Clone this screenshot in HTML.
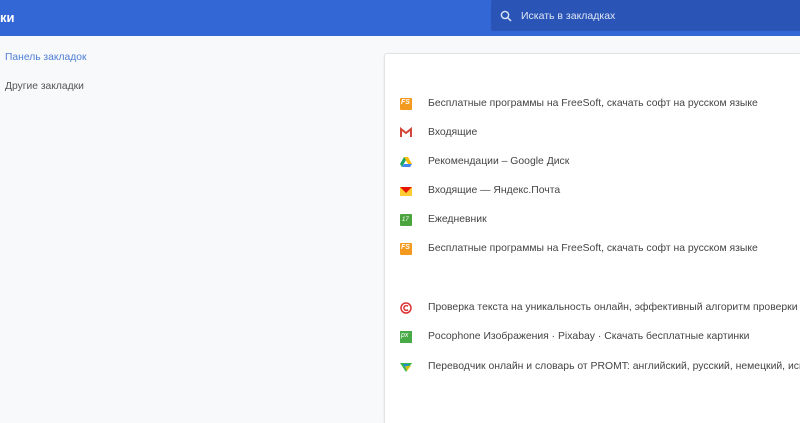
<!DOCTYPE html>
<html><head><meta charset="utf-8"><style>
*{margin:0;padding:0;box-sizing:border-box}
html,body{width:800px;height:423px;overflow:hidden}
body{background:#f8f9fa;font-family:"Liberation Sans",Arial,sans-serif;position:relative}
#wrap{position:absolute;left:0;top:0;width:800px;height:423px;overflow:hidden}
.hdr{position:absolute;left:0;top:0;width:800px;height:36px;background:#3367d6}
.title{position:absolute;left:0;top:10px;color:#fff;font-size:13px;font-weight:bold}
.search{position:absolute;left:491px;top:0;width:309px;height:31px;background:#2a55b7;border-radius:2px 0 0 2px}
.search span{position:absolute;left:30px;top:10px;color:#dfe6f5;font-size:10.5px}
.side{position:absolute;left:5px;font-size:10.3px}
.card{position:absolute;left:384px;top:53px;width:416px;height:370px;background:#fff;border:1px solid #e3e3e3;border-right:none;border-bottom:none;border-radius:3px 0 0 0;box-shadow:0 1px 2px rgba(0,0,0,.08)}
.row{position:absolute;left:400px;width:400px;overflow:hidden;height:16px;font-size:10.4px;color:#444}
.row i{position:absolute;left:0;top:2px;width:12px;height:12px}
.row span{position:absolute;left:28px;top:1px;white-space:nowrap;line-height:14px}
</style></head><body><div id="wrap">
<div class="hdr"><div class="title">ки</div>
<div class="search"><svg style="position:absolute;left:9px;top:10px" width="12" height="12" viewBox="0 0 12 12"><circle cx="5" cy="5" r="3.6" fill="none" stroke="#dfe6f5" stroke-width="1.4"/><path d="M7.6 7.6L11 11" stroke="#dfe6f5" stroke-width="1.5"/></svg><span>Искать в закладках</span></div></div>
<div class="side" style="top:52px;color:#4f7fd6">Панель закладок</div>
<div class="side" style="top:81px;color:#555">Другие закладки</div>
<div class="card"></div>
<div class="row" style="top:96px"><i style="background:#f39a1e;border-radius:1px"><b style="color:#fff;font-size:7px;position:absolute;left:1px;top:1px">FS</b></i><span>Бесплатные программы на FreeSoft, скачать софт на русском языке</span></div>
<div class="row" style="top:125px"><i><svg width="12" height="12"><path d="M1 10V2l5 4 5-4v8" fill="none" stroke="#d44638" stroke-width="2"/></svg></i><span>Входящие</span></div>
<div class="row" style="top:154px"><i><svg width="12" height="12"><path d="M4 1h4l4 7H8z" fill="#fbbc04"/><path d="M4 1L0 8l2 3 4-7z" fill="#1fa463"/><path d="M2 11h8l2-3H4z" fill="#4285f4"/></svg></i><span>Рекомендации – Google Диск</span></div>
<div class="row" style="top:183px"><i><svg width="12" height="12"><rect y="2" width="12" height="9" fill="#fc3"/><path d="M0 2h12L6 8z" fill="#e61400"/></svg></i><span>Входящие — Яндекс.Почта</span></div>
<div class="row" style="top:212px"><i style="background:#4ca43e;border-radius:1px"><b style="color:#fff;font-size:6px;position:absolute;left:2px;top:3px;font-weight:normal">17</b></i><span>Ежедневник</span></div>
<div class="row" style="top:241px"><i style="background:#f39a1e;border-radius:1px"><b style="color:#fff;font-size:7px;position:absolute;left:1px;top:1px">FS</b></i><span>Бесплатные программы на FreeSoft, скачать софт на русском языке</span></div>
<div class="row" style="top:300px"><i><svg width="12" height="12"><circle cx="6" cy="6" r="5" fill="none" stroke="#d33" stroke-width="1.5"/><path d="M8 4.3A2.4 2.4 0 1 0 8 7.7" fill="none" stroke="#d33" stroke-width="1.5"/></svg></i><span>Проверка текста на уникальность онлайн, эффективный алгоритм проверки уникальности</span></div>
<div class="row" style="top:329px"><i style="background:#48a947"><b style="color:#fff;font-size:7px;position:absolute;left:1px;top:1px;font-weight:normal">px</b></i><span>Pocophone Изображения · Pixabay · Скачать бесплатные картинки</span></div>
<div class="row" style="top:359px"><i><svg width="12" height="12"><path d="M0 2l6 9 6-9z" fill="#3cb54a"/><path d="M3 3l3 5 3-5z" fill="#1c8fd6"/><path d="M5 5h6l-4 5z" fill="#f7c600" opacity=".8"/></svg></i><span>Переводчик онлайн и словарь от PROMT: английский, русский, немецкий, испанский</span></div>
</div></body></html>
